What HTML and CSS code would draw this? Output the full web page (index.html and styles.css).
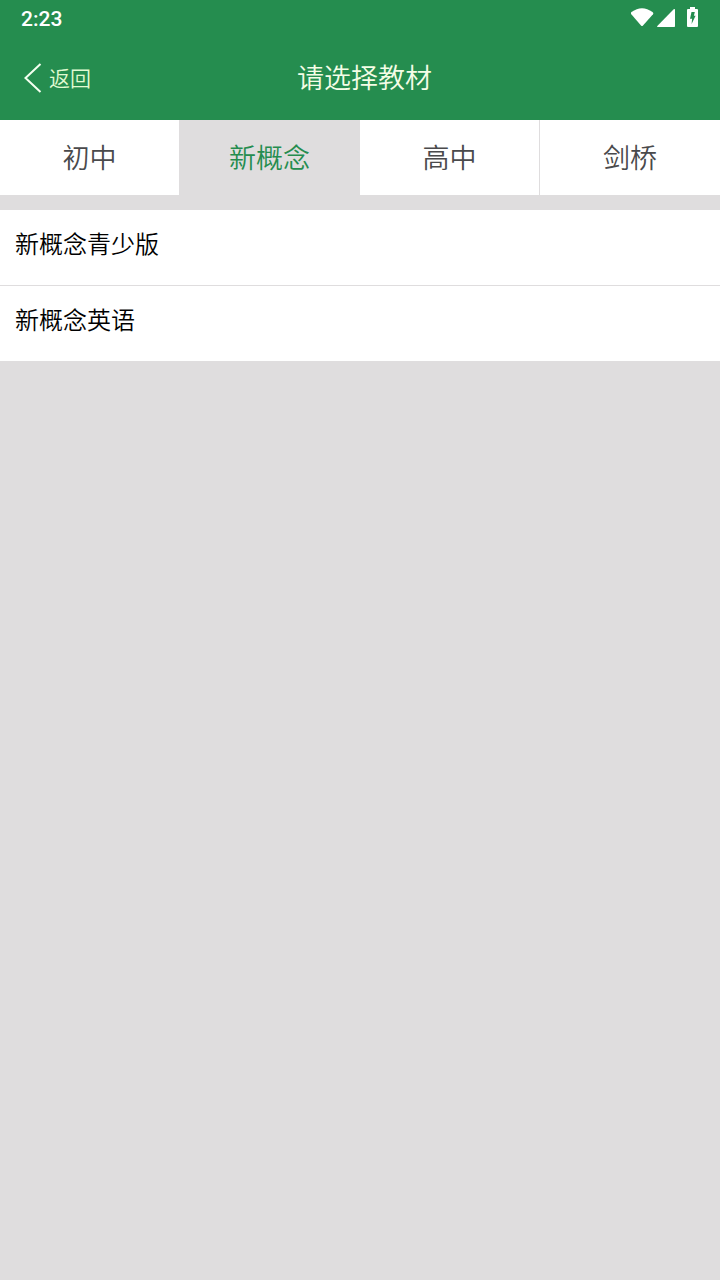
FILE: index.html
```
<!DOCTYPE html>
<html lang="zh-CN">
<head>
    <meta charset="UTF-8">
    <meta name="viewport" content="width=device-width, initial-scale=1.0">
    <title>请选择教材</title>
    <link rel="stylesheet" href="styles.css">
</head>
<body>
    <div class="status-bar">
        <span class="time">2:23</span>
        <svg class="status-icons" width="68" height="24" viewBox="0 0 68 24" aria-hidden="true">
            <!-- wifi -->
            <path d="M0.5 5 Q11 -2.6 21.5 5 Q22.8 6 22 7.2 L12 18.6 Q11 19.6 10 18.6 L0.3 7.2 Q-0.6 6 0.5 5 Z"/>
            <!-- signal -->
            <path d="M44 2.6 V19.2 Q44 20 43.2 20 H26.8 Q25.5 20 26.3 19 L42.7 2.2 Q44 1.4 44 2.6 Z"/>
            <!-- battery, charging -->
            <path fill-rule="evenodd" d="M59 0 H64 V2 H66 Q67 2 67 3 V19 Q67 20 66 20 H57 Q56 20 56 19 V3 Q56 2 57 2 H59 Z M60.5 5 H63.8 L62.9 8.8 H64.6 L60.6 17 L61.1 11.8 H59 Z"/>
        </svg>
    </div>

    <header class="header">
        <button type="button" class="back">
            <svg class="back-icon" width="18" height="30" viewBox="0 0 18 30" aria-hidden="true">
                <path d="M16.5 1 L1.5 15 L16.5 29"/>
            </svg>
            <span class="back-text">返回</span>
        </button>
        <h1 class="title">请选择教材</h1>
    </header>

    <nav class="tabs">
        <button type="button" class="tab">初中</button>
        <button type="button" class="tab active">新概念</button>
        <button type="button" class="tab">高中</button>
        <button type="button" class="tab">剑桥</button>
    </nav>

    <ul class="book-list">
        <li><a href="#">新概念青少版</a></li>
        <li><a href="#">新概念英语</a></li>
    </ul>
</body>
</html>
```
FILE: styles.css
```
* {
    box-sizing: border-box;
}
body {
    margin: 0;
    background-color: #dfddde;
    color: #000;
    font-family: "Noto Sans CJK SC", sans-serif;
    font-weight: 350;
}
button {
    margin: 0;
    padding: 0;
    border: none;
    background: none;
    font: inherit;
    cursor: pointer;
}
.status-bar {
    display: flex;
    align-items: center;
    justify-content: space-between;
    height: 36px;
    padding: 2px 21px 0;
    background-color: #258d4f;
    color: #fff;
    font-family: Roboto, sans-serif;
    font-size: 21px;
    font-weight: 500;
}
.status-icons {
    fill: #fff;
}
.header {
    display: grid;
    grid-template-columns: 1fr auto 1fr;
    align-items: center;
    height: 84px;
    padding: 0 15px 0 24px;
    background-color: #258d4f;
    color: #f4fde6;
}
.back {
    display: flex;
    align-items: center;
    gap: 7px;
    color: #e2fbd2;
    font-size: 21px;
    line-height: 28px;
}
.back-text {
    padding-bottom: 2px;
}
.back-icon {
    fill: none;
    stroke: #f4fff0;
    stroke-width: 2;
}
.title {
    margin: 0;
    padding-bottom: 2px;
    font-size: 27px;
    font-weight: 350;
    line-height: 40px;
}
.tabs {
    display: grid;
    grid-template-columns: repeat(4, 1fr);
    background-color: #fff;
}
.tab {
    height: 75px;
    padding-bottom: 2px;
    border-right: 1px solid #dfddde;
    color: #4a4a4c;
    font-size: 27px;
}
.tab:last-child {
    border-right: none;
}
.tab.active {
    background-color: #dfddde;
    color: #258d4f;
}
.book-list {
    margin: 15px 0 0;
    padding: 0;
    list-style: none;
    background-color: #fff;
}
.book-list li + li {
    border-top: 1px solid #dfddde;
}
.book-list a {
    display: block;
    padding: 15px 15px 24px;
    color: inherit;
    font-size: 24px;
    line-height: 36px;
    text-decoration: none;
}
```
